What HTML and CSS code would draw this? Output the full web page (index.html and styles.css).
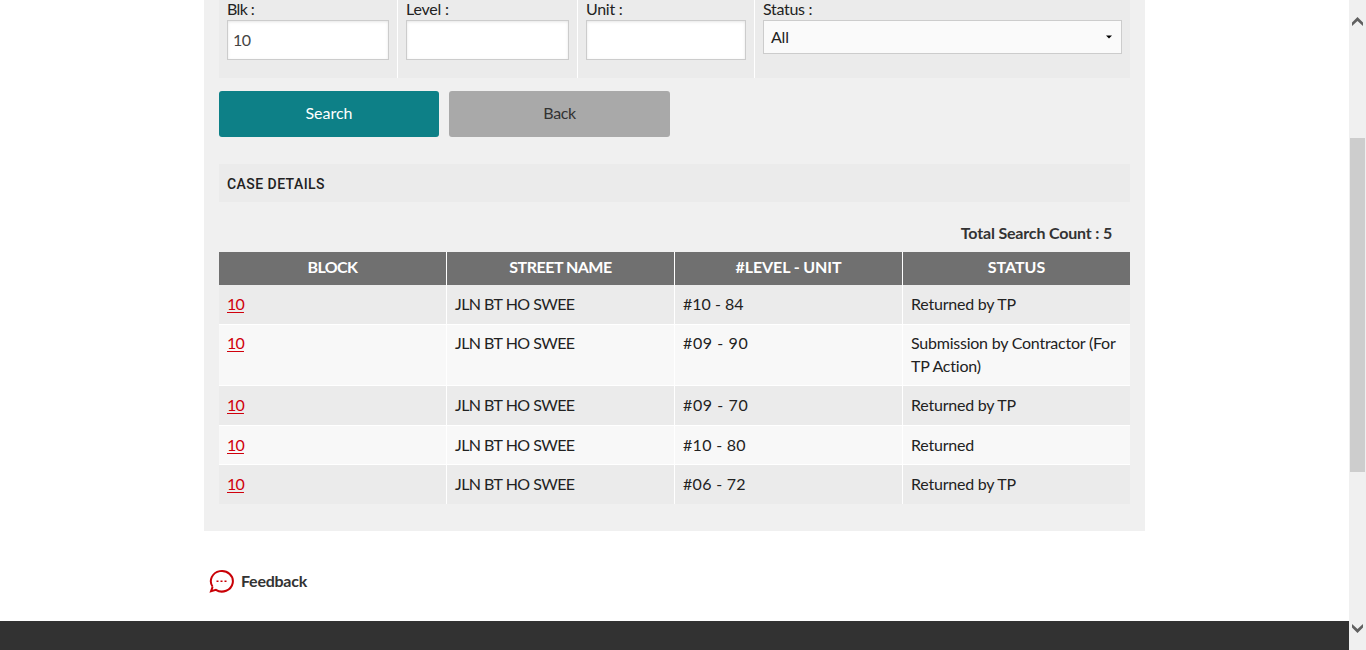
FILE: index.html
```html
<!DOCTYPE html>
<html lang="en">
<head>
<meta charset="utf-8">
<title>Case search</title>
<link rel="stylesheet" href="styles.css">
</head>
<body>
<div class="window">
  <div class="page">
    <main class="panel">
      <div class="filters">
        <label class="field"><span class="label-blk">Blk :</span><input class="input" type="text" value="10"></label>
        <label class="field"><span class="label-level">Level :</span><input class="input" type="text"></label>
        <label class="field"><span class="label-unit">Unit :</span><input class="input" type="text"></label>
        <div class="field"><span class="label-status">Status :</span>
          <div class="select"><span>All</span><svg width="6" height="4" viewBox="0 0 6 4"><path d="M0 0.5H6L3 3.5Z"/></svg></div>
        </div>
      </div>
      <div class="actions">
        <button class="button primary"><span>Search</span></button>
        <button class="button secondary"><span>Back</span></button>
      </div>
      <h2 class="section-title"><span>CASE DETAILS</span></h2>
      <div class="total"><span>Total Search Count : 5</span></div>
      <table class="cases">
        <colgroup><col class="wide"><col class="wide"><col class="wide"><col></colgroup>
        <thead>
          <tr><th><span class="th-block">BLOCK</span></th><th><span class="th-street">STREET NAME</span></th><th><span class="th-level">#LEVEL - UNIT</span></th><th><span class="th-status">STATUS</span></th></tr>
        </thead>
        <tbody>
          <tr class="tall"><td><a href="#">10</a></td><td class="street">JLN BT HO SWEE</td><td>#10 - 84</td><td class="status">Returned by TP</td></tr>
          <tr class="double"><td><a href="#">10</a></td><td class="street">JLN BT HO SWEE</td><td class="unit-wide">#09 - 90</td><td class="status">Submission by Contractor (For<br>TP Action)</td></tr>
          <tr class="tall"><td><a href="#">10</a></td><td class="street">JLN BT HO SWEE</td><td class="unit-wide">#09 - 70</td><td class="status">Returned by TP</td></tr>
          <tr><td><a href="#">10</a></td><td class="street">JLN BT HO SWEE</td><td class="unit-mid">#10 - 80</td><td class="status">Returned</td></tr>
          <tr><td><a href="#">10</a></td><td class="street">JLN BT HO SWEE</td><td class="unit-mid">#06 - 72</td><td class="status">Returned by TP</td></tr>
        </tbody>
      </table>
    </main>
    <div class="feedback">
      <svg width="26" height="26" viewBox="0 0 26 26"><path class="bubble" d="M3.6 18.8A11 10.3 0 1 1 6.9 21.9L2 23.3L3.6 18.8"/><path class="dots" d="M7.5 12.5h2V14h-2zM11.5 12.5h2V14h-2zM15.5 12.5h2V14h-2z"/></svg>
      <span>Feedback</span>
    </div>
    <footer class="footer"></footer>
  </div>
  <div class="scrollbar">
    <svg class="arrow-up" width="11" height="9" viewBox="0 0 11 9"><path d="M0 5.5L5.5 0L11 5.5V9L5.5 4L0 9Z"/></svg>
    <div class="thumb"></div>
    <svg class="arrow-down" width="11" height="9" viewBox="0 0 11 9"><path d="M0 3.5L5.5 9L11 3.5V0L5.5 5L0 0Z"/></svg>
  </div>
</div>
</body>
</html>
```
FILE: styles.css
```css
* { box-sizing: border-box; }
body { margin: 0; background: #fff; color: #222; font: 16px/23px Lato, "Open Sans", sans-serif; overflow: hidden; }
.window { display: flex; height: 650px; }
.page { flex: 1; display: flex; flex-direction: column; }
.panel { width: 941px; height: 531px; margin-left: 204px; padding: 0 15px; background: #f0f0f0; }
.filters { display: grid; grid-template-columns: 179px 180px 177px 375px; height: 78px; background: #ebebeb; }
.field { display: flex; flex-direction: column; align-items: stretch; padding: 0 8px; border-right: 1px solid #fff; }
.field:last-child { border-right: 0; }
.field > span { align-self: flex-start; height: 20px; line-height: 18px; }
.label-blk { letter-spacing: -0.6px; }
.label-level { letter-spacing: -0.2px; }
.label-unit, .label-status { letter-spacing: -0.3px; }
.input { width: 100%; height: 40px; padding: 0 5px 1px; border: 1px solid #ccc; border-radius: 0; background: #fff; box-shadow: inset 0 1px 3px #e6e6e6; color: #444; font: 16px Lato, sans-serif; letter-spacing: -0.6px; outline: 0; }
.select { display: flex; align-items: center; justify-content: space-between; height: 34px; padding: 0 9px 0 7px; border: 1px solid #ccc; background: #fafafa; letter-spacing: -0.2px; }
.select span { padding-bottom: 2px; }
.actions { display: flex; gap: 10px; padding-top: 13px; }
.button { width: 220px; height: 46px; padding: 0 0 3px; border: 0; border-radius: 3px; font: 16px Lato, sans-serif; }
.primary { background: #0d8087; color: #fff; }
.secondary { width: 221px; background: #a9a9a9; color: #333; letter-spacing: -0.4px; }
.section-title { height: 38px; margin: 27px 0 0; padding: 1px 8px 0; background: #ebebeb; font: 500 14px/38px Roboto, sans-serif; letter-spacing: 0.45px; }
.total { height: 50px; padding: 19px 18px 0 0; color: #333; font-weight: bold; letter-spacing: -0.18px; text-align: right; }
.cases { width: 911px; table-layout: fixed; border-collapse: separate; border-spacing: 0; }
.wide { width: 228px; }
.cases th { height: 33px; padding: 0 0 4px; border-right: 1px solid #fff; background: #707070; color: #fff; font-weight: bold; }
.th-block { letter-spacing: -0.6px; }
.th-street { letter-spacing: -0.5px; }
.th-level { letter-spacing: -0.1px; }
.cases td { height: 39px; padding: 7px 8px 0; border-right: 1px solid #fff; border-bottom: 1px solid #fff; background: #f8f8f8; vertical-align: top; white-space: nowrap; }
.cases tr:nth-child(odd) td { background: #ebebeb; }
.cases .tall td { height: 40px; }
.cases .double td { height: 61px; padding-top: 6px; }
.cases .street { letter-spacing: -0.6px; word-spacing: 0.2px; }
.cases .status { letter-spacing: -0.23px; }
.cases .unit-wide { letter-spacing: 0.6px; }
.cases .unit-mid { letter-spacing: 0.3px; }
.cases th:last-child, .cases td:last-child { border-right: 0; }
.cases tr:last-child td { border-bottom: 0; }
.cases a { color: #d0000c; letter-spacing: -0.8px; text-underline-offset: 2px; text-decoration-skip-ink: none; }
.feedback { display: flex; align-items: center; gap: 6px; height: 90px; padding: 10px 0 0 209px; color: #333; font-weight: bold; letter-spacing: -0.25px; }
.feedback span { padding-bottom: 2px; }
.bubble { fill: none; stroke: #c90006; stroke-width: 2; }
.dots { fill: #c90006; }
.footer { height: 29px; background: #323232; }
.scrollbar { display: flex; flex-direction: column; align-items: center; width: 17px; padding: 17px 0; background: #f0f0f0; }
.scrollbar svg { fill: #606060; }
.thumb { width: 15px; height: 334px; margin-top: 112px; background: #cdcdcd; }
.arrow-down { margin-top: auto; }
```
